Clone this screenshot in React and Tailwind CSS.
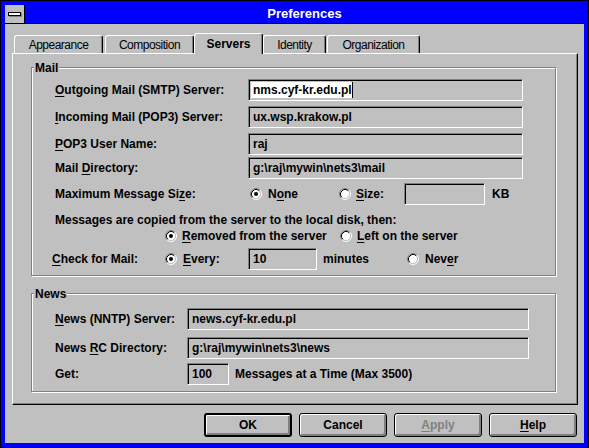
import React from "react";

const Radio = ({ checked }) => (
  <svg width="12" height="12" viewBox="0 0 12 12" className="shrink-0">
    <circle cx="6" cy="6" r="4.5" fill="#fff" />
    <path d="M2.11 9.89 A5.5 5.5 0 0 1 9.89 2.11" fill="none" stroke="#808080" />
    <path d="M9.89 2.11 A5.5 5.5 0 0 1 2.11 9.89" fill="none" stroke="#fff" />
    <path d="M2.82 9.18 A4.5 4.5 0 0 1 9.18 2.82" fill="none" stroke="#000" />
    <path d="M9.18 2.82 A4.5 4.5 0 0 1 2.82 9.18" fill="none" stroke="#c0c0c0" />
    {checked && <circle cx="6" cy="6" r="2" fill="#000" />}
  </svg>
);

const Field = ({ className = "", children }) => (
  <div
    className={`h-[22px] shrink-0 bg-[#c0c0c0] border border-t-[#808080] border-l-[#808080] border-b-white border-r-white shadow-[inset_1px_1px_0_#000] flex items-center pl-[4px] whitespace-nowrap overflow-hidden ${className}`}
  >
    {children}
  </div>
);

const U = ({ children }) => <span className="underline underline-offset-[2px]">{children}</span>;

const Tab = ({ children, className = "" }) => (
  <div
    className={`h-[18px] border-l border-t border-r border-white border-r-black rounded-t-[3px] shadow-[inset_-1px_0_0_#808080] flex items-center justify-center font-normal tracking-[-0.5px] ${className}`}
  >
    {children}
  </div>
);

const Button = ({ children, def, disabled }) => (
  <div
    className={`w-[88px] h-[24px] border-black rounded-[3px] shadow-[inset_1px_1px_0_#fff,inset_-2px_-2px_0_#808080] flex items-center justify-center ${
      def ? "border-2" : "border"
    } ${disabled ? "text-[#808080]" : "text-black"}`}
  >
    {children}
  </div>
);

const Group = ({ label, className = "", children }) => (
  <div
    className={`ml-[18px] w-[525px] border border-[#808080] shadow-[inset_1px_1px_0_#fff,1px_1px_0_#fff] flex flex-col ${className}`}
  >
    <div className="-mt-[7px] ml-[2px] h-[14px] leading-[14px] self-start bg-[#c0c0c0] px-[1px]">{label}</div>
    {children}
  </div>
);

export default function App() {
  return (
    <div className="w-[589px] h-[448px] bg-[#0000ff] border border-black p-[4px] flex flex-col font-['Liberation_Sans',Arial,sans-serif] text-[12px] leading-[14px] font-bold text-black">
      {/* Title bar */}
      <div className="flex h-[19px] shrink-0 border-b border-black bg-[#0000ff]">
        <div className="w-[20px] h-full bg-[#c0c0c0] border-r border-black flex items-center justify-center">
          <div className="w-[13px] h-[4px] bg-white border border-black shadow-[1px_1px_0_#808080]" />
        </div>
        <div className="flex-1 flex items-center justify-center text-white text-[13px]">Preferences</div>
      </div>

      {/* Body */}
      <div className="flex-1 bg-[#c0c0c0] flex flex-col">
        {/* Tabs */}
        <div className="flex items-end h-[20px] mt-[9px] pl-[9px] relative z-10">
          <Tab className="w-[89px]">Appearance</Tab>
          <Tab className="w-[89px] ml-[2px]">Composition</Tab>
          <div className="h-[21px] w-[69px] -mb-[1px] bg-[#c0c0c0] border-l border-t border-r border-white border-r-black rounded-t-[3px] shadow-[inset_-1px_0_0_#808080] flex items-center justify-center">
            Servers
          </div>
          <Tab className="w-[63px]">Identity</Tab>
          <Tab className="w-[93px] ml-[1px]">Organization</Tab>
        </div>

        {/* Panel */}
        <div className="ml-[7px] w-[566px] h-[352px] shrink-0 border border-t-white border-l-white border-r-black border-b-black shadow-[inset_-1px_-1px_0_#808080] flex flex-col">
          <Group label="Mail" className="mt-[13px] pb-[5px]">
            <div className="flex items-center h-[22px] mt-[4px]">
              <div className="ml-[23px] w-[193px]">
                <U>O</U>utgoing Mail (SMTP) Server:
              </div>
              <Field className="w-[275px]">
                <span className="-ml-[2px] pl-[2px] h-[16px] bg-white flex items-center border-r border-black">
                  nms.cyf-kr.edu.pl
                </span>
              </Field>
            </div>
            <div className="flex items-center h-[22px] mt-[5px]">
              <div className="ml-[23px] w-[193px]">
                <U>I</U>ncoming Mail (POP3) Server:
              </div>
              <Field className="w-[275px]">ux.wsp.krakow.pl</Field>
            </div>
            <div className="flex items-center h-[22px] mt-[5px]">
              <div className="ml-[23px] w-[193px]">
                <U>P</U>OP3 User Name:
              </div>
              <Field className="w-[275px]">raj</Field>
            </div>
            <div className="flex items-center h-[22px] mt-[2px]">
              <div className="ml-[23px] w-[193px]">
                Mail <U>D</U>irectory:
              </div>
              <Field className="w-[275px]">g:\raj\mywin\nets3\mail</Field>
            </div>
            <div className="flex items-center h-[22px] mt-[4px]">
              <div className="ml-[23px] w-[193px]">
                Maximum Message Si<U>z</U>e:
              </div>
              <div className="ml-[2px] w-[89px] flex items-center">
                <Radio checked />
                <span className="ml-[6px]">
                  N<U>o</U>ne
                </span>
              </div>
              <div className="w-[65px] flex items-center">
                <Radio />
                <span className="ml-[5px]">
                  <U>S</U>ize:
                </span>
              </div>
              <Field className="w-[81px]" />
              <span className="ml-[7px]">KB</span>
            </div>
            <div className="ml-[23px] mt-[8px] h-[14px] whitespace-nowrap">
              Messages are copied from the server to the local disk, then:
            </div>
            <div className="flex items-center h-[14px] mt-[2px]">
              <div className="ml-[133px] w-[175px] flex items-center">
                <Radio checked />
                <span className="ml-[5px]">
                  <U>R</U>emoved from the server
                </span>
              </div>
              <div className="flex items-center">
                <Radio />
                <span className="ml-[5px]">
                  <U>L</U>eft on the server
                </span>
              </div>
            </div>
            <div className="flex items-center h-[22px] mt-[5px]">
              <div className="ml-[20px] w-[113px]">
                <U>C</U>heck for Mail:
              </div>
              <div className="w-[83px] flex items-center">
                <Radio checked />
                <span className="ml-[6px]">
                  <U>E</U>very:
                </span>
              </div>
              <Field className="w-[69px]">10</Field>
              <div className="w-[90px] pl-[6px]">minutes</div>
              <Radio />
              <span className="ml-[6px]">
                Nev<U>e</U>r
              </span>
            </div>
          </Group>

          <Group label="News" className="mt-[17px] pb-[6px]">
            <div className="flex items-center h-[22px] mt-[7px]">
              <div className="ml-[23px] w-[132px]">
                <U>N</U>ews (NNTP) Server:
              </div>
              <Field className="w-[342px]">news.cyf-kr.edu.pl</Field>
            </div>
            <div className="flex items-center h-[22px] mt-[7px]">
              <div className="ml-[23px] w-[132px]">
                News <U>R</U>C Directory:
              </div>
              <Field className="w-[342px]">g:\raj\mywin\nets3\news</Field>
            </div>
            <div className="flex items-center h-[22px] mt-[4px]">
              <div className="ml-[23px] w-[132px]">Get:</div>
              <Field className="w-[42px]">100</Field>
              <span className="ml-[6px]">Messages at a Time (Max 3500)</span>
            </div>
          </Group>
        </div>

        {/* Buttons */}
        <div className="flex mt-[8px] ml-[199px] gap-[7px]">
          <Button def>OK</Button>
          <Button>Cancel</Button>
          <Button disabled>
            <U>A</U>pply
          </Button>
          <Button>
            <U>H</U>elp
          </Button>
        </div>
      </div>
    </div>
  );
}
